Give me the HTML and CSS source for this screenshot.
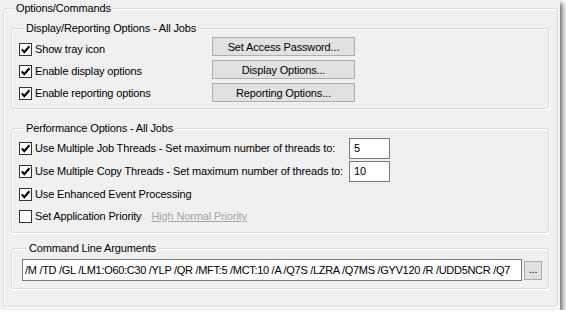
FILE: index.html
```html
<!DOCTYPE html>
<html>
<head>
<meta charset="utf-8">
<link rel="stylesheet" href="styles.css">
</head>
<body>
<div class="panel">
  <div class="group outer">
    <div class="gtitle outer-title">Options/Commands</div>

    <div class="group g1">
      <div class="gtitle">Display/Reporting Options - All Jobs</div>
      <div class="g1-body">
        <div class="checks">
          <div class="cb-row"><span class="cb"><svg viewBox="0 0 11 11" width="11" height="11"><path d="M1.8 5.4 L4.3 8.2 L9.4 2.2" fill="none" stroke="#000" stroke-width="2.1"/></svg></span><span>Show tray icon</span></div>
          <div class="cb-row"><span class="cb"><svg viewBox="0 0 11 11" width="11" height="11"><path d="M1.8 5.4 L4.3 8.2 L9.4 2.2" fill="none" stroke="#000" stroke-width="2.1"/></svg></span><span>Enable display options</span></div>
          <div class="cb-row"><span class="cb"><svg viewBox="0 0 11 11" width="11" height="11"><path d="M1.8 5.4 L4.3 8.2 L9.4 2.2" fill="none" stroke="#000" stroke-width="2.1"/></svg></span><span>Enable reporting options</span></div>
        </div>
        <div class="buttons">
          <div class="btn">Set Access Password...</div>
          <div class="btn">Display Options...</div>
          <div class="btn">Reporting Options...</div>
        </div>
      </div>
    </div>

    <div class="group g2">
      <div class="gtitle">Performance Options - All Jobs</div>
      <div class="g2-body">
        <div class="prow r22">
          <div class="cb-row lbl"><span class="cb"><svg viewBox="0 0 11 11" width="11" height="11"><path d="M1.8 5.4 L4.3 8.2 L9.4 2.2" fill="none" stroke="#000" stroke-width="2.1"/></svg></span><span>Use Multiple Job Threads - Set maximum number of threads to:</span></div>
          <div class="num">5</div>
        </div>
        <div class="prow r24">
          <div class="cb-row lbl"><span class="cb"><svg viewBox="0 0 11 11" width="11" height="11"><path d="M1.8 5.4 L4.3 8.2 L9.4 2.2" fill="none" stroke="#000" stroke-width="2.1"/></svg></span><span>Use Multiple Copy Threads - Set maximum number of threads to:</span></div>
          <div class="num">10</div>
        </div>
        <div class="prow r22">
          <div class="cb-row"><span class="cb"><svg viewBox="0 0 11 11" width="11" height="11"><path d="M1.8 5.4 L4.3 8.2 L9.4 2.2" fill="none" stroke="#000" stroke-width="2.1"/></svg></span><span>Use Enhanced Event Processing</span></div>
        </div>
        <div class="prow r22">
          <div class="cb-row"><span class="cb"></span><span>Set Application Priority</span></div>
          <span class="link-disabled">High Normal Priority</span>
        </div>
      </div>
    </div>

    <div class="group g3">
      <div class="gtitle">Command Line Arguments</div>
      <div class="g3-body">
        <div class="cmd">/M /TD /GL /LM1:O60:C30 /YLP /QR /MFT:5 /MCT:10 /A /Q7S /LZRA /Q7MS /GYV120 /R /UDD5NCR /Q7</div>
        <div class="btn dots">...</div>
      </div>
    </div>
  </div>
</div>
</body>
</html>
```
FILE: styles.css
```css
* { box-sizing: border-box; }
body {
  margin: 0;
  background: #ffffff;
  font-family: "Liberation Sans", Arial, sans-serif;
  font-size: 11px;
  letter-spacing: -0.15px;
  color: #000;
}
.panel {
  width: 560px;
  height: 310px;
  background: #f0f0f0;
  padding: 8px 0 0 3px;
  box-shadow: 3px 3px 5px rgba(0, 0, 0, 0.55);
}
.group {
  border: 1px solid #d5dfe5;
  border-radius: 3px;
  box-shadow: inset 1px 1px 0 #ffffff, 1px 1px 0 #ffffff;
}
.outer {
  width: 555px;
  height: 299px;
  padding: 0 8px 0 7px;
}
.gtitle {
  width: max-content;
  margin: -8px 0 0 5px;
  padding: 0 2px;
  line-height: 14px;
  background: #f0f0f0;
}
.outer-title { margin-left: 3px; }

.g1 {
  margin-top: 13px;
  height: 81px;
  padding-left: 7px;
}
.g1-body {
  display: grid;
  grid-template-columns: 193px 143px;
  margin-top: 2px;
}
.checks { padding-top: 1px; }
.cb-row {
  display: flex;
  align-items: center;
  height: 22px;
  white-space: nowrap;
}
.cb {
  width: 13px;
  height: 13px;
  border: 1px solid #333333;
  background: #ffffff;
  margin-right: 3px;
  flex: none;
  display: flex;
}
.buttons {
  display: flex;
  flex-direction: column;
  gap: 4px;
}
.btn {
  height: 19px;
  background: #e1e1e1;
  border: 1px solid #adadad;
  display: flex;
  align-items: center;
  justify-content: center;
  white-space: nowrap;
}

.g2 {
  margin-top: 19px;
  height: 105px;
  padding-left: 7px;
}
.g2-body { margin-top: 2px; }
.prow {
  display: flex;
  align-items: center;
}
.r22 { height: 22px; }
.r24 { height: 24px; }
.prow .cb-row { height: 100%; }
.lbl { width: 330px; }
.num {
  width: 41px;
  height: 21px;
  background: #ffffff;
  border: 1px solid #7a7a7a;
  padding-left: 4px;
  display: flex;
  align-items: center;
}
.link-disabled {
  margin-left: 10px;
  color: #a6a6a6;
  text-decoration: underline;
}

.g3 {
  margin-top: 15px;
  height: 41px;
  padding-left: 10px;
}
.g3-body {
  display: flex;
  align-items: center;
  margin-top: 4px;
}
.cmd {
  width: 500px;
  height: 22px;
  background: #ffffff;
  border: 1px solid #7a7a7a;
  padding-left: 2px;
  line-height: 20px;
  letter-spacing: -0.3px;
  white-space: nowrap;
  overflow: hidden;
}
.dots {
  width: 18px;
  margin-left: 2px;
  padding-bottom: 3px;
}
```
